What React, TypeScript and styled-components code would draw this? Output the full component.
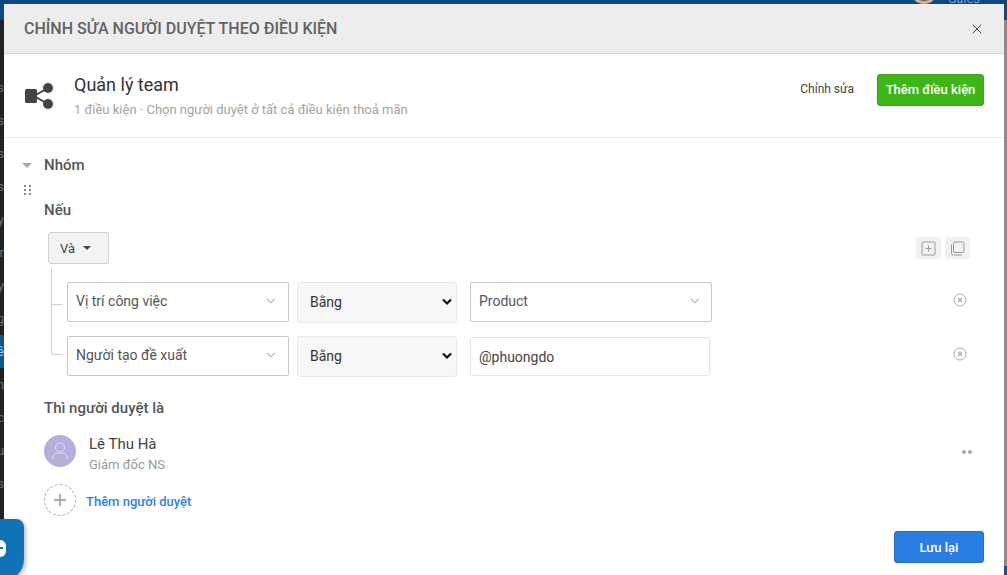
import React from 'react'
import styled, { createGlobalStyle } from 'styled-components'
import { ChevronDown, X, Plus } from 'lucide-react'

const GlobalStyle = createGlobalStyle`
  html, body {
    margin: 0;
    padding: 0;
    overflow: hidden;
  }
  * {
    box-sizing: border-box;
  }
  body {
    font-family: Roboto, "Liberation Sans", sans-serif;
  }
`

const Page = styled.div`
  position: relative;
  width: 1007px;
  height: 575px;
  overflow: hidden;
  display: flex;
  flex-direction: column;
  background: #8c8c8c;
`

const TopBar = styled.div`
  height: 20px;
  flex: none;
  overflow: hidden;
  display: flex;
  justify-content: flex-end;
  padding-right: 27px;
  background: #0f4780;
`

const TopAvatar = styled.div`
  width: 28px;
  height: 28px;
  margin-top: -24px;
  border-radius: 50%;
  background: #8a4a40;
  border: 3px solid #c9b49c;
`

const TopName = styled.div`
  margin: -9px 0 0 10px;
  font-size: 13px;
  line-height: 16px;
  color: #7f9fc2;
`

const Backdrop = styled.div`
  flex: 1;
  display: flex;
  flex-direction: column;
`

const BackdropMain = styled.div`
  flex: 1;
  display: flex;
`

const BottomStrip = styled.div`
  height: 9px;
  flex: none;
  background: #15538f;
`

const SideNav = styled.div`
  width: 4px;
  background: #212225;
  display: flex;
  flex-direction: column;
  padding-top: 51px;
`

const SideItem = styled.div<{ $active?: boolean }>`
  width: 4px;
  height: 33px;
  flex: none;
  overflow: hidden;
  display: flex;
  align-items: center;
  justify-content: flex-end;
  font-size: 13px;
  white-space: nowrap;
  color: ${(p) => (p.$active ? '#a9c2dd' : '#6d6d6d')};
  background: ${(p) => (p.$active ? '#15538f' : 'transparent')};
`

const Modal = styled.div`
  position: absolute;
  top: 4px;
  left: 4px;
  width: 1000px;
  height: 571px;
  background: #fff;
  border-radius: 2px 2px 0 0;
  display: flex;
  flex-direction: column;
`

const ModalHeader = styled.div`
  height: 50px;
  flex: none;
  padding: 0 20px;
  display: flex;
  align-items: center;
  justify-content: space-between;
  background: #ededed;
  border-bottom: 1px solid #d6d6d6;
`

const ModalTitle = styled.div`
  font-size: 16px;
  font-weight: 500;
  color: #636363;
  text-transform: uppercase;
`

const CloseButton = styled.div`
  display: flex;
  color: #444;
  margin-right: -1px;
`

const Summary = styled.div`
  height: 84px;
  flex: none;
  padding: 0 20px 0 21px;
  display: flex;
  align-items: center;
  border-bottom: 1px solid #ececec;
`

const SummaryText = styled.div`
  margin-left: 21px;
  flex: 1;
`

const SummaryTitle = styled.div`
  font-size: 18px;
  line-height: 24px;
  color: #333;
`

const SummarySub = styled.div`
  margin-top: 4px;
  font-size: 13px;
  line-height: 18px;
  color: #a3a3a3;
`

const EditLink = styled.div`
  font-size: 12px;
  color: #444;
  margin-right: 23px;
  margin-bottom: 14px;
`

const Button = styled.div<{ $bg: string; $line: string; $width: number }>`
  display: flex;
  align-items: center;
  justify-content: center;
  width: ${(p) => p.$width}px;
  height: 32px;
  border-radius: 3px;
  color: #fff;
  font-weight: 500;
  font-size: 13px;
  background: ${(p) => p.$bg};
  border: 1px solid ${(p) => p.$line};
`

const AddConditionButton = styled(Button)`
  margin-bottom: 12px;
`

const Body = styled.div`
  flex: 1;
  position: relative;
  padding: 17px 20px 0 40px;
`

const GroupLabel = styled.div`
  font-size: 15px;
  line-height: 20px;
  font-weight: 500;
  color: #555;
`

const GroupCaret = styled.div`
  position: absolute;
  left: 18px;
  top: 25px;
  width: 0;
  height: 0;
  border-left: 5px solid transparent;
  border-right: 5px solid transparent;
  border-top: 5px solid #aaa;
`

const DragDots = styled.div`
  position: absolute;
  left: 20px;
  top: 47px;
  width: 7px;
  height: 10px;
  display: grid;
  grid-template-columns: 2px 2px;
  grid-auto-rows: 2px;
  gap: 2px 3px;
`

const Dot = styled.i`
  display: block;
  background: #888;
`

const SectionLabel = styled(GroupLabel)`
  margin-top: 25px;
`

const OperatorRow = styled.div`
  margin-top: 12px;
  padding-left: 4px;
  display: flex;
  align-items: center;
  justify-content: space-between;
  height: 32px;
`

const OperatorButton = styled.div`
  width: 61px;
  height: 32px;
  background: #f3f3f3;
  border: 1px solid #d4d4d4;
  border-radius: 3px;
  display: flex;
  align-items: center;
  padding-left: 11px;
  gap: 8px;
  font-size: 13px;
  color: #444;
`

const SmallCaret = styled.span`
  width: 0;
  height: 0;
  border-left: 4px solid transparent;
  border-right: 4px solid transparent;
  border-top: 4px solid #444;
`

const ToolGroup = styled.div`
  display: flex;
  gap: 4px;
  margin-right: 14px;
`

const ToolButton = styled.div`
  width: 25px;
  height: 22px;
  border-radius: 3px;
  background: #f2f2f2;
  display: flex;
  align-items: center;
  justify-content: center;
`

const Rule = styled.div<{ $last?: boolean }>`
  position: relative;
  margin-top: ${(p) => (p.$last ? '14px' : '18px')};
  padding-left: 23px;
  display: flex;
  align-items: flex-start;
  height: 40px;

  &::before {
    content: '';
    position: absolute;
    left: 7px;
    top: ${(p) => (p.$last ? '-33px' : '-14px')};
    height: ${(p) => (p.$last ? '51px' : '36px')};
    width: 11px;
    border-left: 1px solid #cfcfcf;
    border-bottom: 1px solid #cfcfcf;
    border-bottom-left-radius: ${(p) => (p.$last ? '3px' : '0')};
  }
`

const FieldSelect = styled.div`
  width: 222px;
  height: 40px;
  flex: none;
  border: 1px solid #c8c8c8;
  border-radius: 2px;
  display: flex;
  align-items: center;
  justify-content: space-between;
  padding: 0 10px 2px 8px;
  font-size: 14px;
  color: #555;
  background: #fff;
`

const ValueSelect = styled(FieldSelect)`
  width: 242px;
  margin-left: 13px;
  padding-right: 9px;
`

const NativeSelect = styled.div`
  width: 160px;
  height: 41px;
  flex: none;
  margin-left: 8px;
  border: 1px solid #e8e8e8;
  border-radius: 3px;
  background: #f7f7f7;
  display: flex;
  align-items: center;
  justify-content: space-between;
  padding: 0 3px 2px 12px;
  font-size: 14px;
  color: #333;
`

const ValueInput = styled.div`
  width: 240px;
  height: 39px;
  flex: none;
  margin: 1px 0 0 13px;
  border: 1px solid #e4e4e4;
  border-radius: 3px;
  display: flex;
  align-items: center;
  padding-left: 8px;
  font-size: 14px;
  color: #444;
`

const RemoveButton = styled.div`
  margin-left: auto;
  margin-right: 17px;
  margin-top: 11px;
  display: flex;
`

const ApproverLabel = styled(GroupLabel)`
  margin-top: 22px;
`

const Approver = styled.div`
  margin-top: 17px;
  height: 32px;
  display: flex;
  align-items: center;
`

const Avatar = styled.div`
  width: 32px;
  height: 32px;
  border-radius: 50%;
  background: #b7afdb;
  display: flex;
  align-items: center;
  justify-content: center;
`

const ApproverText = styled.div`
  margin: 5px 0 0 13px;
  flex: 1;
`

const ApproverName = styled.div`
  font-size: 15px;
  line-height: 18px;
  color: #444;
`

const ApproverRole = styled.div`
  font-size: 13px;
  line-height: 14px;
  margin-top: 5px;
  color: #999;
`

const MoreDots = styled.div`
  display: flex;
  gap: 2px;
  margin-right: 12px;
  margin-top: 1px;
`

const MoreDot = styled.i`
  display: block;
  width: 4px;
  height: 4px;
  border-radius: 50%;
  background: #aaa;
`

const AddRow = styled.div`
  margin-top: 17px;
  display: flex;
  align-items: center;
`

const AddCircle = styled.div`
  width: 32px;
  height: 32px;
  border-radius: 50%;
  border: 1px dashed #aaa;
  display: flex;
  align-items: center;
  justify-content: center;
  color: #aaa;
`

const AddText = styled.div`
  margin: 3px 0 0 10px;
  font-size: 13px;
  font-weight: 500;
  color: #2f80e0;
`

const Footer = styled.div`
  display: flex;
  justify-content: flex-end;
  padding: 0 20px 12px;
`

const ChatBubble = styled.div`
  position: absolute;
  left: -20px;
  top: 519px;
  width: 44px;
  height: 62px;
  border-radius: 8px 8px 22px 16px;
  background: #1272b8;
  box-shadow: 1px 2px 5px rgba(0, 0, 0, 0.35);
  overflow: hidden;
`

const ChatGlyph = styled.div`
  position: absolute;
  left: 12px;
  top: 21px;
  width: 14px;
  height: 17px;
  border-radius: 6px;
  background: #fff;
`

const ChatGlyphEye = styled.div`
  position: absolute;
  left: 8px;
  top: 7px;
  width: 3px;
  height: 2px;
  background: #1272b8;
`

const ShareIcon = () => (
  <svg width="28" height="26" viewBox="0 0 28 26" fill="#444">
    <rect x="0" y="6" width="12" height="14" rx="1.5" />
    <circle cx="23" cy="5" r="5" />
    <circle cx="23" cy="21" r="5" />
    <path d="M9 13 23 5M9 13 23 21" stroke="#444" strokeWidth="2" fill="none" />
  </svg>
)

const AddBoxIcon = () => (
  <svg width="15" height="15" viewBox="0 0 15 15" fill="none" stroke="#999">
    <rect x="1" y="1" width="13" height="13" rx="1" />
    <path d="M7.5 4.5v6M4.5 7.5h6" />
  </svg>
)

const CopyIcon = () => (
  <svg width="15" height="15" viewBox="0 0 15 15" fill="none" stroke="#999">
    <rect x="3.5" y="1" width="10.5" height="10.5" rx="1.5" />
    <path d="M1.5 3.5v9a1.5 1.5 0 0 0 1.5 1.5h9" />
  </svg>
)

const RemoveIcon = () => (
  <svg width="14" height="14" viewBox="0 0 14 14" fill="none" stroke="#aaa">
    <circle cx="7" cy="7" r="6" />
    <path d="M5 5l4 4M9 5l-4 4" strokeWidth="1.2" />
  </svg>
)

const NativeArrow = () => (
  <svg width="12" height="8" viewBox="0 0 12 8" fill="none" stroke="#111" strokeWidth="2.2">
    <path d="M2 1.5 6 5.5 10 1.5" />
  </svg>
)

const PersonIcon = () => (
  <svg width="18" height="18" viewBox="0 0 18 18" fill="none" stroke="#e3dff2">
    <circle cx="9" cy="5.5" r="4.5" />
    <path d="M1.5 17c0-4 3-6 7.5-6s7.5 2 7.5 6" />
  </svg>
)

const sideItems = ['ss', 'ss', 'ss', 'ss', 'y', 'ar', 'y', 'g', 'ề', 'n', 'ắc', 'u', 'as']

export default function App() {
  return (
    <Page>
      <GlobalStyle />
      <TopBar>
        <TopAvatar />
        <TopName>Sales</TopName>
      </TopBar>
      <Backdrop>
        <BackdropMain>
          <SideNav>
            {sideItems.map((label, i) => (
              <SideItem key={i} $active={i === 8}>
                {label}
              </SideItem>
            ))}
          </SideNav>
        </BackdropMain>
        <BottomStrip />
      </Backdrop>
      <Modal>
        <ModalHeader>
          <ModalTitle>Chỉnh sửa người duyệt theo điều kiện</ModalTitle>
          <CloseButton>
            <X size={16} strokeWidth={1.5} />
          </CloseButton>
        </ModalHeader>
        <Summary>
          <ShareIcon />
          <SummaryText>
            <SummaryTitle>Quản lý team</SummaryTitle>
            <SummarySub>1 điều kiện · Chọn người duyệt ở tất cả điều kiện thoả mãn</SummarySub>
          </SummaryText>
          <EditLink>Chỉnh sửa</EditLink>
          <AddConditionButton $bg="#40b518" $line="#3aa516" $width={107}>
            Thêm điều kiện
          </AddConditionButton>
        </Summary>
        <Body>
          <GroupCaret />
          <DragDots>
            {[0, 1, 2, 3, 4, 5].map((i) => (
              <Dot key={i} />
            ))}
          </DragDots>
          <GroupLabel>Nhóm</GroupLabel>
          <SectionLabel>Nếu</SectionLabel>
          <OperatorRow>
            <OperatorButton>
              Và <SmallCaret />
            </OperatorButton>
            <ToolGroup>
              <ToolButton>
                <AddBoxIcon />
              </ToolButton>
              <ToolButton>
                <CopyIcon />
              </ToolButton>
            </ToolGroup>
          </OperatorRow>
          <Rule>
            <FieldSelect>
              Vị trí công việc
              <ChevronDown size={14} strokeWidth={1.25} color="#666" />
            </FieldSelect>
            <NativeSelect>
              Bằng
              <NativeArrow />
            </NativeSelect>
            <ValueSelect>
              Product
              <ChevronDown size={14} strokeWidth={1.25} color="#666" />
            </ValueSelect>
            <RemoveButton>
              <RemoveIcon />
            </RemoveButton>
          </Rule>
          <Rule $last>
            <FieldSelect>
              Người tạo đề xuất
              <ChevronDown size={14} strokeWidth={1.25} color="#666" />
            </FieldSelect>
            <NativeSelect>
              Bằng
              <NativeArrow />
            </NativeSelect>
            <ValueInput>@phuongdo</ValueInput>
            <RemoveButton>
              <RemoveIcon />
            </RemoveButton>
          </Rule>
          <ApproverLabel>Thì người duyệt là</ApproverLabel>
          <Approver>
            <Avatar>
              <PersonIcon />
            </Avatar>
            <ApproverText>
              <ApproverName>Lê Thu Hà</ApproverName>
              <ApproverRole>Giám đốc NS</ApproverRole>
            </ApproverText>
            <MoreDots>
              <MoreDot />
              <MoreDot />
            </MoreDots>
          </Approver>
          <AddRow>
            <AddCircle>
              <Plus size={18} strokeWidth={2.6} />
            </AddCircle>
            <AddText>Thêm người duyệt</AddText>
          </AddRow>
        </Body>
        <Footer>
          <Button $bg="#2a7de1" $line="#2a6fc4" $width={90}>
            Lưu lại
          </Button>
        </Footer>
      </Modal>
      <ChatBubble>
        <ChatGlyph>
          <ChatGlyphEye />
        </ChatGlyph>
      </ChatBubble>
    </Page>
  )
}
